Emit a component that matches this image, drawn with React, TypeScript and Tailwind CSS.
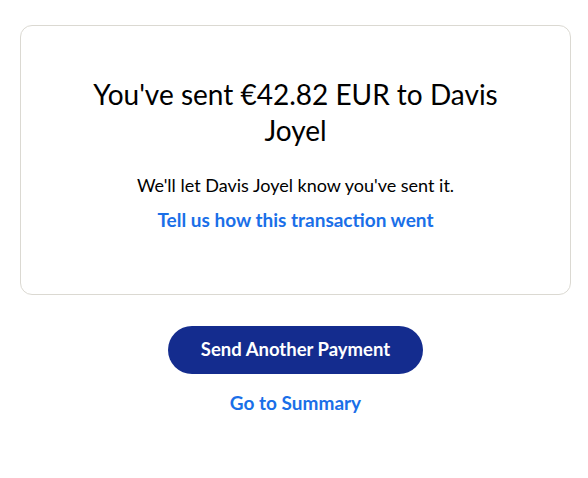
export default function App() {
  return (
    <div className="w-[588px] h-[478px] bg-white font-['Lato','Liberation_Sans',sans-serif] text-black pt-[25px] pl-[20px] pr-[17px]">
      <div className="border border-[#dbd9d2] rounded-[12px] px-[40px] pt-[50px] pb-[61px] flex flex-col items-center text-center">
        <h1 className="text-[28px] leading-[36px] font-normal max-w-[440px]">
          You've sent €42.82 EUR to Davis Joyel
        </h1>
        <p className="mt-[24px] text-[18px] leading-[26px]">
          We'll let Davis Joyel know you've sent it.
        </p>
        <a className="mt-[9px] text-[19px] leading-[26px] font-bold text-[#1a6fe8]">
          Tell us how this transaction went
        </a>
      </div>
      <div className="mt-[31px] flex flex-col items-center">
        <button className="w-[255px] h-[48px] rounded-full bg-[#142c8e] text-white text-[18.5px] font-bold">
          Send Another Payment
        </button>
        <a className="mt-[16px] text-[19px] leading-[26px] font-bold text-[#1a6fe8]">
          Go to Summary
        </a>
      </div>
    </div>
  );
}
